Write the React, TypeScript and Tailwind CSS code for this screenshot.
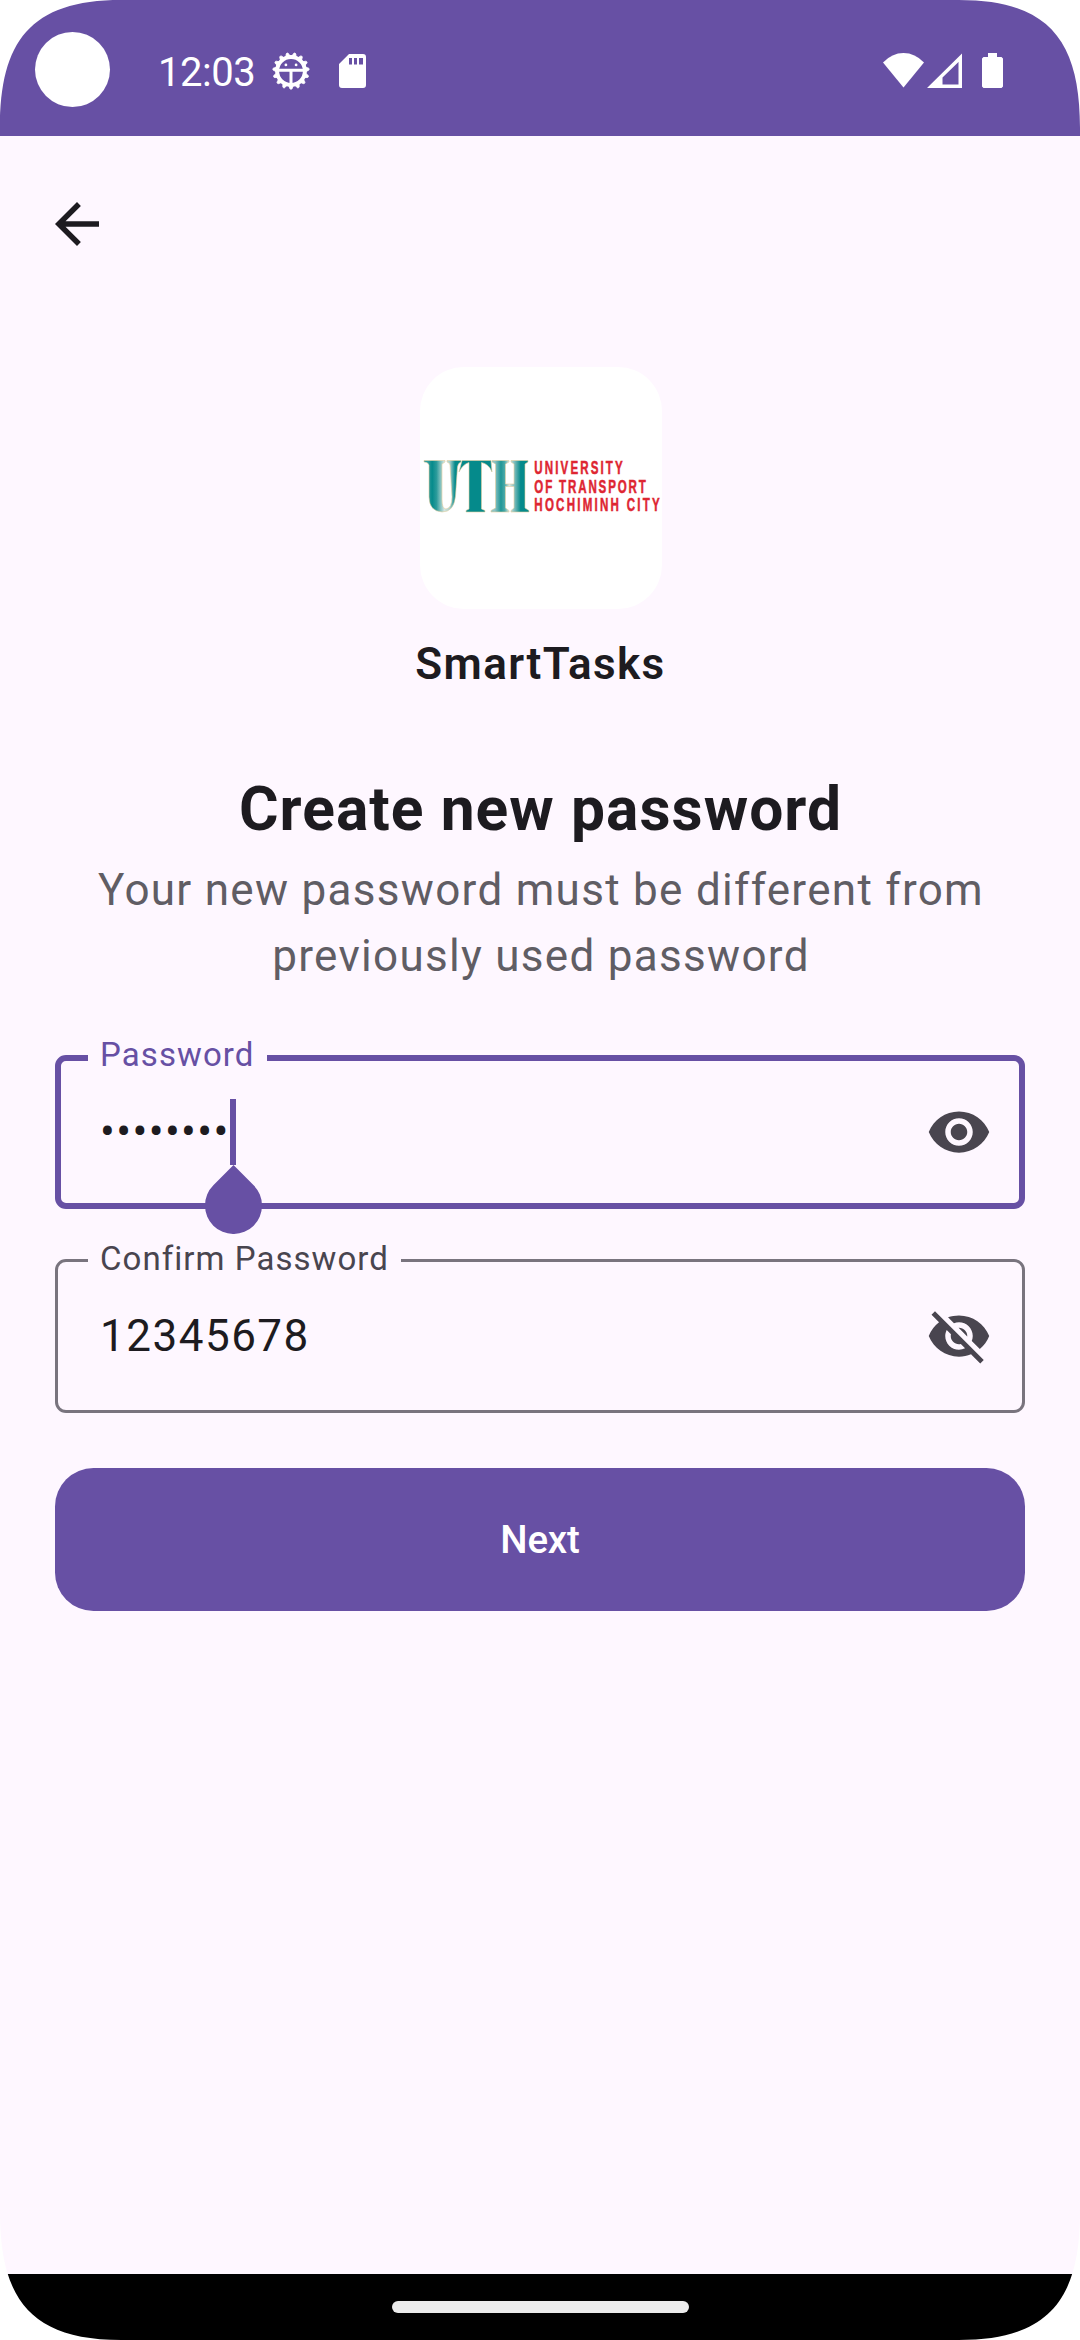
import React from "react";
import { MdArrowBack, MdVisibility, MdVisibilityOff } from "react-icons/md";

const CORNER = "M0 0H121C30 0 0 42 0 128Z";

function Corner({ className }: { className: string }) {
  return (
    <svg viewBox="0 0 121 128" className={`absolute h-[128px] w-[121px] ${className}`} aria-hidden>
      <path d={CORNER} fill="#fff" />
    </svg>
  );
}

function GearIcon() {
  const teeth = Array.from({ length: 15 }, (_, i) => 90 + i * 24);
  return (
    <svg viewBox="0 0 40 40" className="size-10" aria-hidden>
      <circle cx="20" cy="20" r="13.9" fill="none" stroke="#fff" strokeWidth="4" />
      {teeth.map((a) => (
        <path key={a} d="M34.500 17.8L37.500 18.800A1.300 1.300 0 0 1 37.500 21.200L34.500 22.2Z" fill="#fff" stroke="#fff" strokeWidth="0.8" transform={`rotate(${a} 20 20)`} />
      ))}
      <path d="M8 19.2H32M20 19V33" stroke="#fff" strokeWidth="3" />
      <circle cx="14.9" cy="13.9" r="1.4" fill="#fff" />
      <circle cx="25.1" cy="13.9" r="1.4" fill="#fff" />
    </svg>
  );
}

function StatusBar() {
  return (
    <header className="flex h-[136px] items-start bg-[#6750a4] text-white">
      <div className="mt-8 ml-[35px] size-[75px] rounded-full bg-white" />
      <span className="mt-[49px] ml-12 w-[97px] text-[40px] leading-[47px] tracking-[-0.5px]">12:03</span>
      <div className="mt-[51px] ml-[16px]">
        <GearIcon />
      </div>
      <svg viewBox="0 0 27 34" className="mt-[54px] ml-[28px] h-[34px] w-[27px]" aria-hidden>
        <path fillRule="evenodd" fill="#fff" d="M10 0H24Q27 0 27 3V31Q27 34 24 34H3Q0 34 0 31V10ZM10 4V10.500H13V4ZM15 4V10.500H18V4ZM20 4V10.500H24V4Z" />
      </svg>
      <svg viewBox="0 0 41 35" className="mt-[53px] ml-auto h-[35px] w-[41px]" aria-hidden>
        <path d="M20.500 34.500L0 9.500Q9 0 20.500 0T41 9.500Z" fill="#fff" />
      </svg>
      <svg viewBox="0 0 35 35" className="mt-[53px] ml-[3px] h-[35px] w-[35px]" aria-hidden>
        <path fillRule="evenodd" fill="#fff" d="M35 0.500V35H0ZM31.500 9L15.500 24.500V31.500H31.500Z" />
      </svg>
      <svg viewBox="0 0 21 35" className="mt-[53px] mr-[77px] ml-[20px] h-[35px] w-[21px]" aria-hidden>
        <path fill="#fff" d="M6 0H15V4H19.500L21 5.500V33.500L19.500 35H1.500L0 33.500V5.500L1.500 4H6Z" />
      </svg>
    </header>
  );
}

function Logo() {
  return (
    <svg viewBox="0 0 242 242" className="size-[242px] rounded-[44px] bg-white" role="img" aria-label="University of Transport Ho Chi Minh City">
      <defs>
        <linearGradient id="u" gradientUnits="userSpaceOnUse" x1="4" x2="41" y1="0" y2="0">
          <stop offset="0.12" stopColor="#2f9c9b" />
          <stop offset="0.22" stopColor="#058a8b" />
          <stop offset="0.34" stopColor="#2c9b9b" />
          <stop offset="0.55" stopColor="#d5e6e2" />
          <stop offset="0.7" stopColor="#a5cfce" />
          <stop offset="0.84" stopColor="#058a8b" />
        </linearGradient>
        <linearGradient id="h" gradientUnits="userSpaceOnUse" x1="71" x2="109" y1="0" y2="0">
          <stop offset="0.1" stopColor="#8fc3c3" />
          <stop offset="0.26" stopColor="#1f9696" />
          <stop offset="0.36" stopColor="#4ba9a8" />
          <stop offset="0.48" stopColor="#dfeae5" />
          <stop offset="0.62" stopColor="#7dbcbb" />
          <stop offset="0.78" stopColor="#058a8b" />
        </linearGradient>
      </defs>
      <g stroke="#e3cf9f" strokeWidth="0.6">
        <path fill="url(#u)" d="M4 93.500H25V95L22 97V132Q22 142 26 142Q32 141 32 130L30 98Q30 96 27 95V93.500H41V95Q38 96 37.500 100L35.500 129Q34 145 22 145Q9 144 9 130V98Q8 95 4 95Z" />
        <path fill="#058a8b" d="M42 93.500H71L72 105Q69 97 61.500 95.500V142L65 143.500V145H46V143.500L49 142V95.500Q43 97 39 105Z" />
        <path fill="url(#h)" d="M72 93.500H89V95L85.500 97V117H94V97L91 95V93.500H108V95L105 97V141L109 143.500V145H91V143.500L94 141V119.500H85.500V141L89 143.500V145H71V143.500L75.500 141V97L72 95Z" />
      </g>
      <g fill="#de2632" stroke="#de2632" strokeWidth="0.5" fontFamily="'Liberation Sans', Arial, sans-serif" fontSize="17.500" fontWeight="700">
        <text x="0" y="0" transform="translate(114.300 107) scale(0.66 1)" textLength="134" lengthAdjust="spacing">UNIVERSITY</text>
        <text x="0" y="0" transform="translate(114.300 125.500) scale(0.66 1)" textLength="169" lengthAdjust="spacing">OF TRANSPORT</text>
        <text x="0" y="0" transform="translate(114.300 144.200) scale(0.66 1)" textLength="190" lengthAdjust="spacing">HOCHIMINH CITY</text>
      </g>
    </svg>
  );
}

function CursorHandle() {
  return (
    <span className="absolute top-0 -right-[6px] h-[66px] w-[5.500px] bg-[#6750a4]">
      <svg viewBox="0 0 57 69" className="absolute top-[66px] left-[-25.500px] h-[69px] w-[57px] max-w-none" aria-hidden>
        <path fill="#6750a4" d="M28.500 0L48.650 20.350A28.500 28.500 0 1 1 8.350 20.350Z" />
      </svg>
    </span>
  );
}

type FieldProps = {
  label: string;
  value: string;
  focused?: boolean;
  icon: React.ReactNode;
};

function Field({ label, value, focused = false, icon }: FieldProps) {
  return (
    <div
      className={
        focused
          ? "relative flex h-[154px] items-center justify-between rounded-[11px] border-[6px] border-[#6750a4] pr-[27px] pl-[39px]"
          : "relative flex h-[154px] items-center justify-between rounded-[11px] border-[3px] border-[#79747e] pr-[30px] pl-[42px]"
      }
    >
      <span
        className={
          focused
            ? "absolute -top-7 left-[27px] bg-[#fef7ff] px-3 text-[33px] leading-[44px] tracking-[1.100px] text-[#6750a4]"
            : "absolute -top-[25px] left-[30px] bg-[#fef7ff] px-3 text-[33px] leading-[44px] tracking-[1.050px] text-[#49454f]"
        }
      >
        {label}
      </span>
      <span
        className={
          focused
            ? "relative text-[44px] leading-[66px] tracking-[1.375px] text-[#1d1b20]"
            : "relative text-[44px] leading-[66px] tracking-[1.500px] text-[#1d1b20]"
        }
      >
        {value}
        {focused && <CursorHandle />}
      </span>
      {icon}
    </div>
  );
}

export default function App() {
  return (
    <div className="relative flex h-[2340px] w-[1080px] flex-col overflow-hidden bg-[#fef7ff] font-['Roboto',sans-serif] text-[#1d1b20]">
      <StatusBar />
      <main className="flex flex-1 flex-col px-[55px]">
        <button className="mt-[55px] -ml-[11px] self-start" aria-label="Back">
          <MdArrowBack className="size-[66px]" />
        </button>
        <div className="mt-[110px] ml-[2px] flex justify-center">
          <Logo />
        </div>
        <p className="mt-[22px] pl-px text-center text-[44px] leading-[66px] font-semibold tracking-[1.375px]">SmartTasks</p>
        <h1 className="mt-20 pl-px text-center text-[60.500px] leading-[66px] font-bold tracking-[1.050px]">Create new password</h1>
        <p className="mt-3.5 pl-[2px] text-center text-[44px] leading-[66px] tracking-[1.300px] text-[#605d64]">
          Your new password must be different from
          <br />
          previously used password
        </p>
        <form className="mt-[66px] flex flex-col" onSubmit={(e) => e.preventDefault()}>
          <Field label="Password" value="••••••••" focused icon={<MdVisibility className="size-[66px] text-[#49454f]" />} />
          <div className="mt-[50px]">
            <Field label="Confirm Password" value="12345678" icon={<MdVisibilityOff className="size-[66px] text-[#49454f]" />} />
          </div>
          <button className="mt-[55px] h-[143px] rounded-[38.500px] bg-[#6750a4] text-[38.500px] leading-[55px] font-medium tracking-[-0.200px] text-white">
            Next
          </button>
        </form>
      </main>
      <footer className="flex h-[66px] justify-center bg-black">
        <div className="mt-[27px] h-[12px] w-[297px] rounded-full bg-[#ececec]" />
      </footer>
      <Corner className="top-0 left-0" />
      <Corner className="top-0 right-0 -scale-x-100" />
      <Corner className="bottom-0 left-0 -scale-y-100" />
      <Corner className="right-0 bottom-0 rotate-180" />
    </div>
  );
}
